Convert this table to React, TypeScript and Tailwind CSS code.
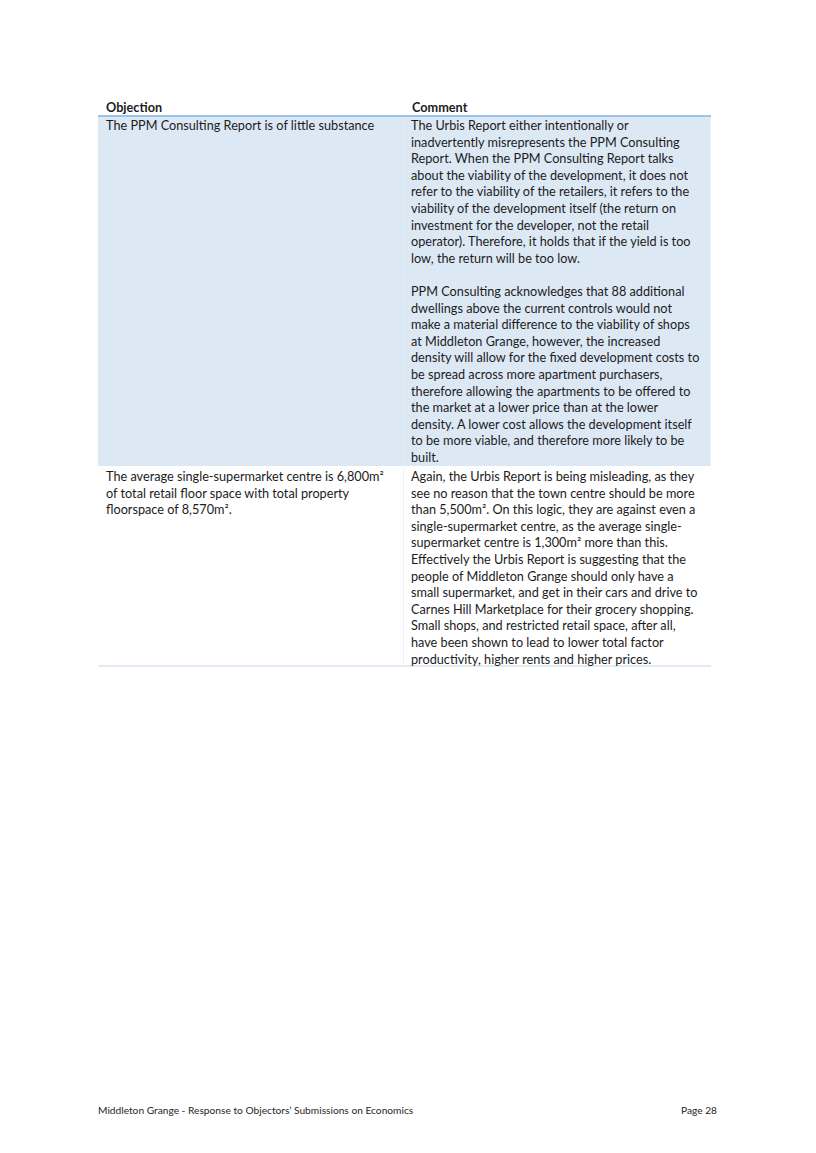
const rowOneComment = [
  'The Urbis Report either intentionally or',
  'inadvertently misrepresents the PPM Consulting',
  'Report. When the PPM Consulting Report talks',
  'about the viability of the development, it does not',
  'refer to the viability of the retailers, it refers to the',
  'viability of the development itself (the return on',
  'investment for the developer, not the retail',
  'operator). Therefore, it holds that if the yield is too',
  'low, the return will be too low.',
  '',
  'PPM Consulting acknowledges that 88 additional',
  'dwellings above the current controls would not',
  'make a material difference to the viability of shops',
  'at Middleton Grange, however, the increased',
  'density will allow for the fixed development costs to',
  'be spread across more apartment purchasers,',
  'therefore allowing the apartments to be offered to',
  'the market at a lower price than at the lower',
  'density. A lower cost allows the development itself',
  'to be more viable, and therefore more likely to be',
  'built.',
];

const rowTwoObjection = [
  'The average single-supermarket centre is 6,800m²',
  'of total retail floor space with total property',
  'floorspace of 8,570m².',
];

const rowTwoComment = [
  'Again, the Urbis Report is being misleading, as they',
  'see no reason that the town centre should be more',
  'than 5,500m². On this logic, they are against even a',
  'single-supermarket centre, as the average single-',
  'supermarket centre is 1,300m² more than this.',
  'Effectively the Urbis Report is suggesting that the',
  'people of Middleton Grange should only have a',
  'small supermarket, and get in their cars and drive to',
  'Carnes Hill Marketplace for their grocery shopping.',
  'Small shops, and restricted retail space, after all,',
  'have been shown to lead to lower total factor',
  'productivity, higher rents and higher prices.',
];

function Lines({ lines }: { lines: string[] }) {
  return (
    <>
      {lines.map((line, i) => (
        <span key={i} className="block whitespace-nowrap h-[16.6px]">
          {line}
        </span>
      ))}
    </>
  );
}

export default function App() {
  return (
    <div className="flex flex-col h-[1153px] w-[816px] bg-white text-[#1c1c1c] font-['Lato',sans-serif]">
      <div className="ml-[98px] mt-[100px] w-[613px] text-[12.7px] leading-[16.6px]">
        {/* header */}
        <div className="flex h-[17px] border-b-2 border-[#9dc3e6] font-bold leading-[15px]">
          <div className="w-[306px] pl-[8px]">Objection</div>
          <div className="flex-1 pl-[8px]">Comment</div>
        </div>

        {/* row 1 */}
        <div className="flex bg-[#dde8f5] h-[349px]">
          <div className="w-[306px] pl-[8px] border-r border-[#e3ecf7]">
            The PPM Consulting Report is of little substance
          </div>
          <div className="flex-1 pl-[7px] border-r border-[#e6eef8]">
            <Lines lines={rowOneComment} />
          </div>
        </div>

        {/* row 2 */}
        <div className="flex pt-[2px] h-[201px] border-b-2 border-[#e1ebf6]">
          <div className="w-[306px] pl-[8px] border-r border-[#ecf2f9]">
            <Lines lines={rowTwoObjection} />
          </div>
          <div className="flex-1 pl-[7px]">
            <Lines lines={rowTwoComment} />
          </div>
        </div>
      </div>

      <div className="mt-auto mb-[37px] ml-[98px] w-[619px] flex justify-between text-[10.2px] leading-[12px] text-[#262626]">
        <span>Middleton Grange - Response to Objectors’ Submissions on Economics</span>
        <span>Page 28</span>
      </div>
    </div>
  );
}
